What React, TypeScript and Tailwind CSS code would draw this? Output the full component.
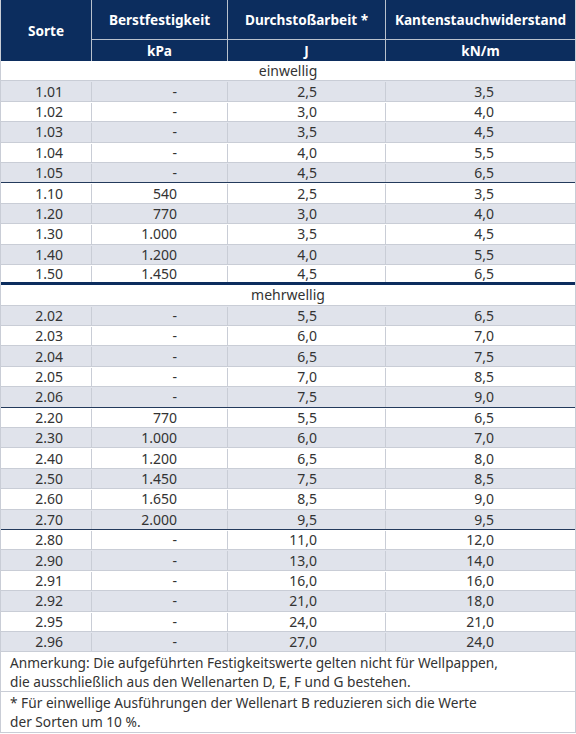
import clsx from "clsx";

type Row = { s: string; b: string; d: string; k: string; sep?: "thin" | "thick" };

const einwellig: Row[] = [
  { s: "1.01", b: "-", d: "2,5", k: "3,5" },
  { s: "1.02", b: "-", d: "3,0", k: "4,0" },
  { s: "1.03", b: "-", d: "3,5", k: "4,5" },
  { s: "1.04", b: "-", d: "4,0", k: "5,5" },
  { s: "1.05", b: "-", d: "4,5", k: "6,5", sep: "thin" },
  { s: "1.10", b: "540", d: "2,5", k: "3,5" },
  { s: "1.20", b: "770", d: "3,0", k: "4,0" },
  { s: "1.30", b: "1.000", d: "3,5", k: "4,5" },
  { s: "1.40", b: "1.200", d: "4,0", k: "5,5" },
  { s: "1.50", b: "1.450", d: "4,5", k: "6,5", sep: "thick" },
];

const mehrwellig: Row[] = [
  { s: "2.02", b: "-", d: "5,5", k: "6,5" },
  { s: "2.03", b: "-", d: "6,0", k: "7,0" },
  { s: "2.04", b: "-", d: "6,5", k: "7,5" },
  { s: "2.05", b: "-", d: "7,0", k: "8,5" },
  { s: "2.06", b: "-", d: "7,5", k: "9,0", sep: "thin" },
  { s: "2.20", b: "770", d: "5,5", k: "6,5" },
  { s: "2.30", b: "1.000", d: "6,0", k: "7,0" },
  { s: "2.40", b: "1.200", d: "6,5", k: "8,0" },
  { s: "2.50", b: "1.450", d: "7,5", k: "8,5" },
  { s: "2.60", b: "1.650", d: "8,5", k: "9,0" },
  { s: "2.70", b: "2.000", d: "9,5", k: "9,5", sep: "thin" },
  { s: "2.80", b: "-", d: "11,0", k: "12,0" },
  { s: "2.90", b: "-", d: "13,0", k: "14,0" },
  { s: "2.91", b: "-", d: "16,0", k: "16,0" },
  { s: "2.92", b: "-", d: "21,0", k: "18,0" },
  { s: "2.95", b: "-", d: "24,0", k: "21,0" },
  { s: "2.96", b: "-", d: "27,0", k: "24,0" },
];

function DataRow({ row, gray }: { row: Row; gray: boolean }) {
  return (
    <div
      className={clsx(
        "flex h-[20.4px] pt-px",
        gray ? "bg-[#e0e3eb]" : "bg-white",
        row.sep === "thick"
          ? "border-b-[3px] border-[#0c2d5e]"
          : row.sep === "thin"
            ? "border-b-[1.5px] border-[#233a5c]"
            : "border-b border-[#c9cdd6]"
      )}
    >
      <div className="w-[91px] flex items-center justify-end pr-[28px] border-r border-[#c9cdd6]">
        {row.s}
      </div>
      <div className="w-[136px] flex items-center justify-end pr-[50px] border-r border-[#c9cdd6]">
        {row.b}
      </div>
      <div className="w-[158px] flex items-center justify-end pr-[68px] border-r border-[#c9cdd6]">
        {row.d}
      </div>
      <div className="flex-1 flex items-center justify-end pr-[81px]">{row.k}</div>
    </div>
  );
}

function Section({ title, rows }: { title: string; rows: Row[] }) {
  return (
    <>
      <div className="h-[20.4px] pt-px flex items-center justify-center bg-white border-b border-[#c9cdd6]">
        {title}
      </div>
      {rows.map((r, i) => (
        <DataRow key={r.s} row={r} gray={i % 2 === 0} />
      ))}
    </>
  );
}

export default function App() {
  return (
    <div className="w-[576px] h-[734px] bg-white text-[14px] leading-none text-[#333333] font-['Noto_Sans',sans-serif]">
      <div className="border-x border-[#c9cdd6]">
        <div className="flex h-[61px] bg-[#0c2d5e] text-white font-bold text-[13.6px]">
          <div className="w-[91px] flex items-center justify-center border-r border-[#b9c1cd]">Sorte</div>
          <div className="flex-1 flex flex-col">
            <div className="flex h-[40px] border-b border-[#b9c1cd]">
              <div className="w-[136px] flex items-center justify-center border-r border-[#b9c1cd]">
                Berstfestigkeit
              </div>
              <div className="w-[158px] flex items-center justify-center border-r border-[#b9c1cd]">
                Durchstoßarbeit *
              </div>
              <div className="flex-1 flex items-center justify-center">Kantenstauchwiderstand</div>
            </div>
            <div className="flex flex-1">
              <div className="w-[136px] flex items-center justify-center border-r border-[#b9c1cd]">kPa</div>
              <div className="w-[158px] flex items-center justify-center border-r border-[#b9c1cd]">J</div>
              <div className="flex-1 flex items-center justify-center">kN/m</div>
            </div>
          </div>
        </div>
        <Section title="einwellig" rows={einwellig} />
        <Section title="mehrwellig" rows={mehrwellig} />
        <div className="h-[40px] flex flex-col justify-center px-[9px] text-[13.7px] leading-[19px] border-b border-[#c9cdd6]">
          <p>Anmerkung: Die aufgeführten Festigkeitswerte gelten nicht für Wellpappen,</p>
          <p>die ausschließlich aus den Wellenarten D, E, F und G bestehen.</p>
        </div>
        <div className="h-[41px] flex flex-col justify-center px-[9px] text-[13.7px] leading-[19px] border-b border-[#c9cdd6]">
          <p>* Für einwellige Ausführungen der Wellenart B reduzieren sich die Werte</p>
          <p>der Sorten um 10 %.</p>
        </div>
      </div>
    </div>
  );
}
